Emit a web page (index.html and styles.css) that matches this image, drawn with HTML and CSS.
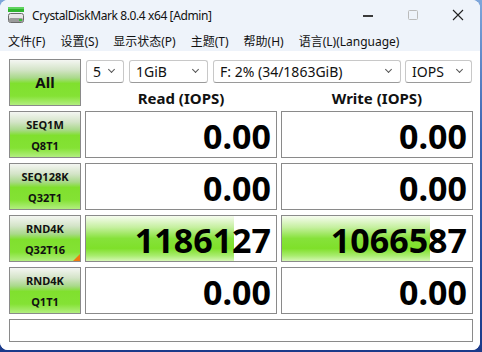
FILE: index.html
```html
<!DOCTYPE html>
<html>
<head>
<meta charset="utf-8">
<link rel="stylesheet" href="styles.css">
</head>
<body>
<div class="window">
  <div class="titlebar">
    <svg class="appicon" width="16" height="16" viewBox="0 0 16 16">
      <rect x="0" y="0" width="16" height="5" fill="#2fb52f"/>
      <rect x="0" y="0" width="16" height="2" fill="#5fd35f"/>
      <rect x="0.5" y="6.5" width="15" height="9" rx="2" fill="#e6e6e6" stroke="#6b6b6b"/>
      <rect x="1" y="11" width="14" height="4" rx="1.5" fill="#9a9a9a"/>
      <rect x="11" y="12" width="3" height="2" fill="#38c038"/>
    </svg>
    <span class="title">CrystalDiskMark 8.0.4 x64 [Admin]</span>
    <div class="controls">
      <div class="ctl"><div class="minline"></div></div>
      <div class="ctl"><svg width="12" height="12" viewBox="0 0 12 12"><rect x="1.5" y="1.5" width="9" height="9" rx="1" fill="none" stroke="#bbb"/></svg></div>
      <div class="ctl"><svg width="12" height="12" viewBox="0 0 12 12"><path d="M1 1L11 11M11 1L1 11" stroke="#222" stroke-width="1.1"/></svg></div>
    </div>
  </div>
  <div class="menubar">
    <span>文件(F)</span><span>设置(S)</span><span>显示状态(P)</span><span>主题(T)</span><span>帮助(H)</span><span>语言(L)(Language)</span>
  </div>
  <div class="client">
    <div class="grid">
      <div class="btn all">All</div>
      <div class="topright">
        <div class="combos">
          <div class="combo c1">5<span class="chev"></span></div>
          <div class="combo c2">1GiB<span class="chev"></span></div>
          <div class="combo c3">F: 2% (34/1863GiB)<span class="chev"></span></div>
          <div class="combo c4">IOPS<span class="chev"></span></div>
        </div>
        <div class="heads">
          <div class="head">Read (IOPS)</div>
          <div class="head">Write (IOPS)</div>
        </div>
      </div>

      <div class="btn"><span>SEQ1M</span><span>Q8T1</span></div>
      <div class="box"><span class="val">0.00</span></div>
      <div class="box"><span class="val">0.00</span></div>

      <div class="btn"><span>SEQ128K</span><span>Q32T1</span></div>
      <div class="box"><span class="val">0.00</span></div>
      <div class="box"><span class="val">0.00</span></div>

      <div class="btn marked"><span>RND4K</span><span>Q32T16</span></div>
      <div class="box"><div class="fill" style="width:148px"></div><span class="val">1186127</span></div>
      <div class="box"><div class="fill" style="width:148px"></div><span class="val">1066587</span></div>

      <div class="btn"><span>RND4K</span><span>Q1T1</span></div>
      <div class="box"><span class="val">0.00</span></div>
      <div class="box"><span class="val">0.00</span></div>

      <div class="status"></div>
    </div>
  </div>
</div>
</body>
</html>
```

FILE: styles.css
```css
* { box-sizing: border-box; }
html, body { margin: 0; padding: 0; }
body {
  width: 482px;
  height: 352px;
  background: linear-gradient(180deg, #7ea6da 0%, #3a62b0 40%, #1a3a8a 100%);
  font-family: "Noto Sans", "Noto Sans CJK SC", sans-serif;
  overflow: hidden;
}
.window {
  width: 480px;
  height: 350px;
  border-radius: 8px;
  overflow: hidden;
  background: #ffffff;
  display: flex;
  flex-direction: column;
}
.titlebar {
  height: 30px;
  background: #eef3fa;
  display: flex;
  align-items: center;
  padding-left: 8px;
}
.appicon { flex: none; }
.title {
  margin-left: 8px;
  font-size: 12px;
  letter-spacing: -0.4px;
  color: #111;
}
.controls {
  margin-left: auto;
  display: flex;
}
.ctl {
  width: 45px;
  height: 30px;
  display: flex;
  align-items: center;
  justify-content: center;
  flex: none;
}
.minline {
  width: 10px;
  height: 0;
  border-top: 2px solid #3a3a3a;
  margin-top: 1px;
}
.menubar {
  height: 21px;
  background: #eef3fa;
  display: flex;
  align-items: center;
  padding-left: 8px;
  gap: 15px;
  font-size: 12px;
  color: #111;
}
.client {
  flex: 1;
  background: #ffffff;
  padding: 8px 0 0 9px;
}
.grid {
  display: grid;
  grid-template-columns: 72px 192px 192px;
  grid-template-rows: 47px 47px 47px 47px 47px 23px;
  column-gap: 4px;
  row-gap: 5px;
}
.btn {
  border: 1px solid #8a8a8a;
  background: linear-gradient(180deg, #f4f6f2 0%, #d4e4c8 22%, #a9d98a 40%, #80e02e 52%, #84e234 80%, #b2ee80 100%);
  display: flex;
  flex-direction: column;
  align-items: center;
  justify-content: center;
  font-weight: 700;
  font-size: 11px;
  line-height: 21px;
  color: #111;
  position: relative;
}
.btn.all {
  font-size: 15px;
}
.btn.marked::after {
  content: "";
  position: absolute;
  right: 0;
  bottom: 0;
  width: 0;
  height: 0;
  border-left: 7px solid transparent;
  border-bottom: 7px solid #f07a10;
}
.topright {
  grid-column: 2 / 4;
  display: flex;
  flex-direction: column;
}
.combos {
  display: flex;
  height: 23px;
  margin-top: 1px;
  margin-left: 1px;
}
.combo {
  height: 23px;
  border: 1px solid #c8c8c8;
  border-bottom-color: #9a9a9a;
  border-radius: 3px;
  background: #fff;
  font-size: 14px;
  line-height: 21px;
  padding-left: 6px;
  color: #111;
  position: relative;
  white-space: nowrap;
}
.c1 { width: 38px; }
.c2 { width: 79px; margin-left: 5px; }
.c3 { width: 188px; margin-left: 5px; }
.c4 { width: 67px; margin-left: 4px; }
.chev {
  position: absolute;
  right: 9px;
  top: 6px;
  width: 5px;
  height: 5px;
  border-right: 1px solid #555;
  border-bottom: 1px solid #555;
  transform: rotate(45deg);
}
.heads {
  display: grid;
  grid-template-columns: 192px 192px;
  column-gap: 4px;
  flex: 1;
  padding-top: 4px;
}
.head {
  text-align: center;
  font-weight: 700;
  font-size: 15px;
  line-height: 22px;
  color: #111;
}
.box {
  border: 1px solid #8a8a8a;
  background: #fff;
  position: relative;
  display: flex;
  align-items: center;
  justify-content: flex-end;
  padding-right: 5px;
  padding-top: 3px;
}
.fill {
  position: absolute;
  left: 0;
  top: 0;
  bottom: 0;
  background: linear-gradient(180deg, #f6fcef 0%, #c6f0a0 25%, #86e23a 50%, #7fe02a 72%, #a8ec6e 88%, #d6f7b6 100%);
}
.val {
  position: relative;
  font-size: 34px;
  font-weight: 700;
  color: #000;
  line-height: 1;
}
.status {
  grid-column: 1 / 4;
  border: 1px solid #8a8a8a;
  background: #fff;
}
```
